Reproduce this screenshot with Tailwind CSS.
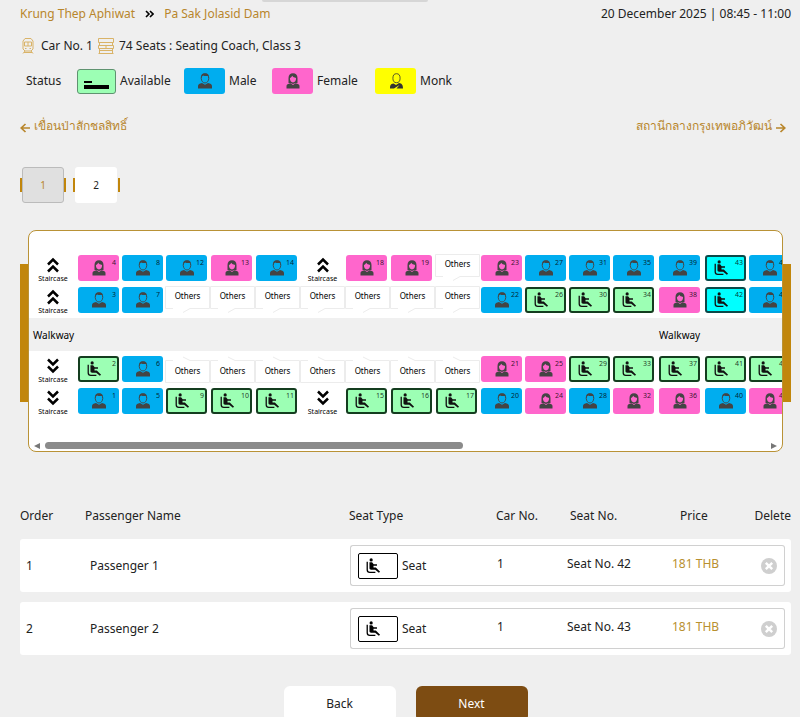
<!DOCTYPE html>
<html lang="en">
<head>
  <meta charset="UTF-8">
  <meta name="viewport" content="width=device-width, initial-scale=1.0">
  <title>Select seats</title>
  <script src="https://cdn.jsdelivr.net/npm/@tailwindcss/browser@4"></script>
</head>
<body class="bg-[#efefef] font-['Noto_Sans','Open_Sans',sans-serif] text-[12px] leading-5 text-[#222] overflow-x-hidden">

  <!-- icons -->
  <svg class="hidden">
    <symbol id="male" viewBox="0 0 14 16">
      <path d="M3.300 5.500C3.300 2.500 4.700 1 7 1s3.700 1.500 3.700 4.500C10.700 8 9 10 7 10S3.300 8 3.300 5.500z" fill="none" stroke="currentColor" stroke-width=".9"/>
      <path d="M2.800 5.500C2.700 2 4 .3 7 .3S11.300 2 11.200 5.500L10.200 3C8 3.300 6 2.800 5 2.400L3.800 3.500z" fill="currentColor"/>
      <path d="M0 15.500V13c0-1.700 1.500-2.500 4-3l3 1.700L10 10c2.500.500 4 1.300 4 3v2.500z" fill="currentColor"/>
    </symbol>
    <symbol id="female" viewBox="0 0 14 16">
      <path fill-rule="evenodd" d="M2.500 10V5C2.500 2 4.200.3 7 .3S11.500 2 11.500 5v5l-2.500.300L7 11l-2-.700zM3.900 5C3.900 7.500 5 9.400 7 9.400s3.100-1.900 3.100-4.400C8.300 4.600 6.800 4 6.200 2.800 5.700 4 4.800 4.800 3.900 5z" fill="currentColor"/>
      <path d="M.5 15.500V13c0-1.600 1.500-2.300 4-2.800L7 12l2.500-1.800c2.500.500 4 1.200 4 2.800v2.500z" fill="currentColor"/>
    </symbol>
    <symbol id="monk" viewBox="0 0 14 16">
      <ellipse cx="7.500" cy="5.200" rx="3.600" ry="4.500" fill="none" stroke="currentColor" stroke-width=".8"/>
      <path d="M1 15.500c0-3 .5-4.500 3.500-5L7 12l3-2c3 .500 4 2 4 5.500H7.500l3-3.500L5 15.500z" fill="currentColor"/>
    </symbol>
    <symbol id="seat" viewBox="0 0 16 17">
      <circle cx="5.500" cy="2" r="1.700" fill="currentColor"/>
      <path d="M3.700 4.500h2.800l1.700 2.200h3.500v1.500H8V10h2.500l4.500 4.600-1.300 1.200L9.800 12.500H5.500C4.300 12.500 3.700 12 3.700 11z" fill="currentColor"/>
      <path d="M1.300 4v8.500c0 1.800 1 2.800 2.800 2.800H10" fill="none" stroke="currentColor" stroke-width="1.400"/>
    </symbol>
    <symbol id="up" viewBox="0 0 12 16">
      <path d="M1 7.500 6 2.500l5 5M1 14.500l5-5 5 5" fill="none" stroke="currentColor" stroke-width="2.500"/>
    </symbol>
    <symbol id="down" viewBox="0 0 12 16">
      <path d="M1 1.500l5 5 5-5M1 8.500l5 5 5-5" fill="none" stroke="currentColor" stroke-width="2.500"/>
    </symbol>
    <symbol id="notch-down" viewBox="0 0 45 32">
      <path d="M.5 24.500V2.500H44.500V24.500H25L18 28.500M.5 24.500H8" fill="none" stroke="#ececec"/>
    </symbol>
    <symbol id="notch-up" viewBox="0 0 45 32">
      <path d="M.5 7.500V29.500H44.500V7.500H25L18 4M.5 7.500H8" fill="none" stroke="#ececec"/>
    </symbol>
    <symbol id="arrow" viewBox="0 0 11 10">
      <path d="M1 5h9M5.500 1l4.300 4-4.300 4" fill="none" stroke="currentColor" stroke-width="1.700"/>
    </symbol>
  </svg>

  <div class="absolute left-[262px] top-0 h-0.5 w-[166px] rounded-b bg-[#d6d6d6]"></div>

  <main class="pl-5 pr-[9px] pt-1">
    <header class="flex items-center">
      <span class="text-[#b8862c]">Krung Thep Aphiwat</span>
      <svg class="mx-[10px] h-2 w-[9px] text-black" viewBox="0 0 9 8"><path d="M1 1l3 3-3 3M5 1l3 3-3 3" fill="none" stroke="currentColor" stroke-width="1.600"/></svg>
      <span class="text-[#b8862c]">Pa Sak Jolasid Dam</span>
      <span class="ml-auto">20 December 2025 | 08:45 - 11:00</span>
    </header>

    <div class="mt-3 flex items-center">
      <svg class="ml-0.5 h-4 w-3 text-[#d9b368]" viewBox="0 0 12 16" fill="none" stroke="currentColor"><path d="M3 .5h6l2 2.500v8l-2 2H3l-2-2V3zM2.500 4h7v4h-7zM6 4v4M3 10.500h1.500M7.500 10.500H9M3 13l-2 2.500M9 13l2 2.500M2 14.500h8"/></svg>
      <span class="ml-[7px]">Car No. 1</span>
      <svg class="ml-[5px] h-4 w-4 text-[#d9b368]" viewBox="0 0 16 16" fill="none" stroke="currentColor"><path d="M.5 .5h15v4H.5zM.5 7.500h15v3H.5zM1.500 4.500v3M14.500 4.500v3M1.500 10.500v5M14.500 10.500v5M.5 15.500h15M1.500 12.500h13M8 7.500v3"/></svg>
      <span class="ml-[5px]">74 Seats : Seating Coach, Class 3</span>
    </div>

    <div class="mt-3 flex h-[26px] items-center">
      <span class="ml-1.5 w-[51px]">Status</span>
      <span class="flex h-[25px] w-[39px] items-center justify-center rounded-[3px] border border-[#5f9370] bg-[#9cffb4]">
        <svg class="h-[10px] w-[25px] translate-y-1" viewBox="0 0 25 10"><path d="M0 1h8v2H0zM0 5h25v4H0z"/></svg>
      </span>
      <span class="ml-1 w-[64px]">Available</span>
      <span class="flex h-[26px] w-[41px] items-center justify-center rounded-[3px] bg-[#00adef] text-[#444]"><svg class="h-4 w-3.5"><use href="#male"/></svg></span>
      <span class="ml-1 w-[43px]">Male</span>
      <span class="flex h-[26px] w-[41px] items-center justify-center rounded-[3px] bg-[#ff66cc] text-[#444]"><svg class="h-4 w-3.5"><use href="#female"/></svg></span>
      <span class="ml-1 w-[58px]">Female</span>
      <span class="flex h-[26px] w-[41px] items-center justify-center rounded-[3px] bg-[#ffff00] text-[#333]"><svg class="h-4 w-3.5"><use href="#monk"/></svg></span>
      <span class="ml-1">Monk</span>
    </div>

    <div class="mt-[22px] flex justify-between pr-[5px] text-[#b8862c]">
      <span class="flex items-center"><svg class="mr-[3px] mt-1 h-[10px] w-[11px] rotate-180"><use href="#arrow"/></svg>เขื่อนป่าสักชลสิทธิ์</span>
      <span class="flex items-center">สถานีกลางกรุงเทพอภิวัฒน์<svg class="ml-[3px] mt-1 h-[10px] w-[11px]"><use href="#arrow"/></svg></span>
    </div>

    <!-- coach tabs -->
    <nav class="mt-[31px] flex gap-[7px] text-[10px]">
      <div class="flex items-center">
        <i class="h-3.5 w-0.5 bg-[#c1860c]"></i>
        <button class="h-9 w-[42px] rounded-[3px] border border-[#bbb] bg-[#e0e0e0] text-[#b8862c]">1</button>
        <i class="h-3.5 w-0.5 bg-[#c1860c]"></i>
      </div>
      <div class="flex items-center">
        <i class="h-3.5 w-0.5 bg-[#c1860c]"></i>
        <button class="mr-px h-9 w-[42px] rounded-[3px] bg-white">2</button>
        <i class="h-3.5 w-0.5 bg-[#c1860c]"></i>
      </div>
    </nav>

    <section class="mt-[27px] flex">
      <div class="mt-[34px] h-[138px] w-2 shrink-0 bg-[#c1860c]"></div>
      <div class="min-w-0 flex-1 rounded-lg border border-[#b99236] bg-white">
        <div class="overflow-hidden">
          <div id="upper" class="grid w-max grid-cols-[48px_44px_44px_45px_45px_45px_45px_45px_45px_45px_44px_44px_44px_46px_46px_44px_44px] auto-rows-[32px] pt-[21px] pb-0.5"></div>
          <div class="flex h-[33px] items-center bg-[#f0f0f0] text-[10px] text-black">
            <span class="w-[626px] shrink-0 pl-1">Walkway</span>
            <span class="pl-1">Walkway</span>
          </div>
          <div id="lower" class="grid w-max grid-cols-[48px_44px_44px_45px_45px_45px_45px_45px_45px_45px_44px_44px_44px_46px_46px_44px_44px] auto-rows-[32px] pt-0.5"></div>
        </div>
        <div class="mt-6 flex h-[10px] items-center px-[5px] pb-px">
          <svg class="h-2 w-1.5 text-[#777]" viewBox="0 0 6 8"><path d="M6 1v6L0 4z" fill="currentColor"/></svg>
          <div class="mx-[5px] flex-1"><div class="h-[7px] w-[58%] rounded-full bg-[#8b8b8b]"></div></div>
          <svg class="h-2 w-1.5 text-[#777]" viewBox="0 0 6 8"><path d="M0 1v6l6-3z" fill="currentColor"/></svg>
        </div>
      </div>
      <div class="mt-[34px] h-[138px] w-2 shrink-0 bg-[#c1860c]"></div>
    </section>

    <table class="mt-[54px] w-full table-fixed border-separate border-spacing-0">
      <thead>
        <tr class="text-left">
          <th class="w-[65px] font-normal">Order</th>
          <th class="font-normal">Passenger Name</th>
          <th class="w-[147px] font-normal">Seat Type</th>
          <th class="w-[71px] font-normal">Car No.</th>
          <th class="w-[105px] pl-[3px] font-normal">Seat No.</th>
          <th class="w-[76px] pl-2 font-normal">Price</th>
          <th class="w-[43px] text-right font-normal">Delete</th>
        </tr>
      </thead>
      <tbody id="passengers"></tbody>
    </table>

    <div class="mt-[31px] flex justify-center gap-5">
      <button class="h-9 w-[112px] rounded-md bg-white">Back</button>
      <button class="h-9 w-[112px] rounded-md bg-[#7d4c12] text-white">Next</button>
    </div>
  </main>

  <script>
    // s: staircase, o: others, m: male, f: female, a: available, x: selected
    const upper = [
      's f4 m8 m12 f13 m14 s f18 f19 o f23 m27 m31 m35 m39 x43 m47',
      's m3 m7 o o o o o o o m22 a26 a30 a34 f38 x42 m46'
    ];
    const lower = [
      's a2 m6 o o o o o o o f21 f25 a29 a33 a37 a41 a45',
      's m1 m5 a9 a10 a11 s a15 a16 a17 m20 f24 m28 f32 f36 m40 f44'
    ];

    const styles = {
      m: 'bg-[#00adef] text-[#444]',
      f: 'bg-[#ff66cc] text-[#444]',
      a: 'bg-[#9cffb4] text-[#111] border-2 border-[#143d1f]',
      x: 'bg-[#00ffff] text-[#111] border-2 border-[#0b4a4a]'
    };

    function cell(code, isUpper) {
      const type = code[0];
      if (type === 's') {
        return `<div class="flex flex-col items-center pt-[5px] text-[7px] leading-[8px] text-black">
          <svg class="mb-0.5 h-4 w-3 shrink-0"><use href="#${isUpper ? 'up' : 'down'}"/></svg>Staircase</div>`;
      }
      if (type === 'o') {
        return `<div class="relative text-center text-[8px] leading-[12px] text-black ${isUpper ? 'pt-1.5' : 'pt-3'}">
          <svg class="absolute inset-0 h-8 w-full"><use href="#${isUpper ? 'notch-down' : 'notch-up'}"/></svg>Others</div>`;
      }
      const num = code.slice(1);
      const free = type === 'a' || type === 'x';
      const icon = { m: 'male', f: 'female' }[type] || 'seat';
      return `<div class="pl-px pt-[3px]">
        <button aria-label="Seat ${num}" class="relative flex h-[26px] w-[41px] items-center rounded-[3px] ${free ? 'justify-start pl-[7px]' : 'justify-center'} ${styles[type]}">
          <svg class="${free ? 'h-4 w-[15px]' : 'h-4 w-3.5'}"><use href="#${icon}"/></svg>
          <span class="absolute text-[7px] leading-[8px] text-black/80 ${free ? 'right-px top-0.5' : 'right-[3px] top-1'}">${num}</span>
        </button></div>`;
    }

    document.getElementById('upper').innerHTML = upper.join(' ').split(' ').map(c => cell(c, true)).join('');
    document.getElementById('lower').innerHTML = lower.join(' ').split(' ').map(c => cell(c, false)).join('');

    const passengers = [
      { name: 'Passenger 1', car: 1, seat: 42, price: 181 },
      { name: 'Passenger 2', car: 1, seat: 43, price: 181 }
    ];

    document.getElementById('passengers').innerHTML = passengers.map((p, i) => `
      <tr><td colspan="7" class="${i ? 'h-[10px]' : 'h-[13px]'}"></td></tr>
      <tr>
        <td class="rounded-l-[3px] bg-white pl-1.5">${i + 1}</td>
        <td class="bg-white pl-[5px]">${p.name}</td>
        <td class="bg-white py-1.5 pl-px">
          <div class="flex h-[41px] items-center rounded-l-[3px] border-y border-l border-[#d0d0d0] pl-[7px]">
            <span class="mr-1 flex h-[26px] w-10 items-center rounded-[2px] border border-black pl-[7px] text-black"><svg class="h-4 w-[15px]"><use href="#seat"/></svg></span>Seat
          </div>
        </td>
        <td class="bg-white py-1.5"><div class="h-[41px] border-y border-[#d0d0d0] pl-px pt-2">${p.car}</div></td>
        <td class="bg-white py-1.5"><div class="h-[41px] border-y border-[#d0d0d0] pt-2">Seat No. ${p.seat}</div></td>
        <td class="bg-white py-1.5"><div class="h-[41px] border-y border-[#d0d0d0] pt-2 text-[#b8902f]">${p.price} THB</div></td>
        <td class="rounded-r-[3px] bg-white py-1.5 pr-1.5">
          <div class="flex h-[41px] items-center justify-end rounded-r-[3px] border-y border-r border-[#d0d0d0] pr-[7px]">
            <button aria-label="Delete"><svg class="h-4 w-4" viewBox="0 0 16 16"><circle cx="8" cy="8" r="8" fill="#cfcfcf"/><path d="M4.800 4.800l6.400 6.400M11.200 4.800l-6.400 6.400" stroke="#fff" stroke-width="2.400"/></svg></button>
          </div>
        </td>
      </tr>`).join('');
  </script>
</body>
</html>
